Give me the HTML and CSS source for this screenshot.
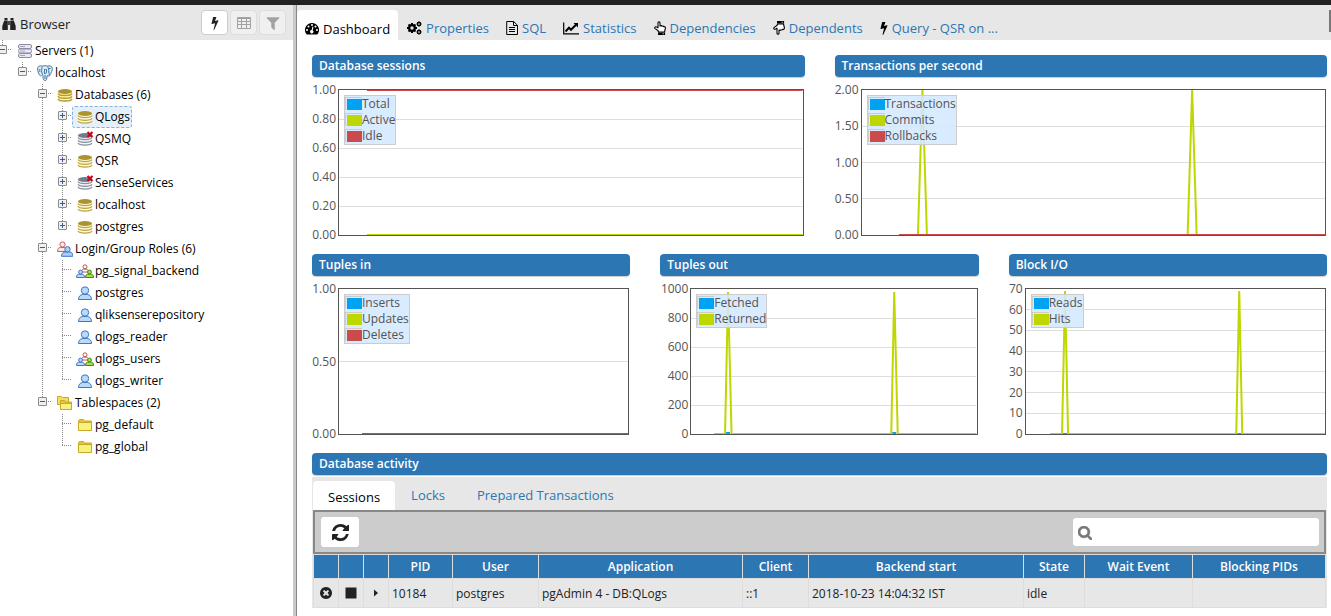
FILE: index.html
```html
<!DOCTYPE html>
<html lang="en">
<head>
<meta charset="utf-8">
<title>pgAdmin 4</title>
<link rel="stylesheet" href="styles.css">
</head>
<body>
<svg class="sprite" aria-hidden="true">
  <defs>
    <symbol id="bolt" viewBox="448 0 896 1792"><path d="M1333 566q18 20 7 44l-540 1157q-13 25-42 25-4 0-14-2-17-5-25.500-19t-4.500-30l197-808-406 101q-4 1-12 1-18 0-31-11-18-15-13-39l201-825q4-14 16-23t28-9h328q19 0 32 12.500t13 29.500q0 8-5 18l-171 463 396-98q8-2 12-2 19 0 34 15z"/></symbol>
    <symbol id="filter" viewBox="128 128 1536 1536"><path d="M1595 295q17 41-14 70l-493 493v742q0 42-39 59-13 5-25 5-27 0-45-19l-256-256q-19-19-19-45v-486l-493-493q-31-29-14-70 17-39 59-39h1280q42 0 59 39z"/></symbol>
    <symbol id="table" viewBox="0 0 14 12"><path fill-rule="evenodd" d="M1 0h12q1 0 1 1v10q0 1-1 1H1q-1 0-1-1V1q0-1 1-1zM1 2v2h3V2zM5 2v2h4V2zM10 2v2h3V2zM1 5v2h3V5zM5 5v2h4V5zM10 5v2h3V5zM1 8v3h3V8zM5 8v3h4V8zM10 8v3h3V8z"/></symbol>
    <symbol id="binoculars" viewBox="0 0 14 14"><path d="M2.500 1h3v2H2.500zM8.500 1h3v2h-3zM2.200 3.500h3.600V13H.3V9zM8.200 3.500h3.600L13.700 9v4H8.200zM6.200 4h1.600v4H6.200z"/></symbol>
    <symbol id="gauge" viewBox="0 0 14 12"><path fill-rule="evenodd" d="M7 0a7 7 0 0 1 6 10.600q-.3.900-1.200.900H2.200q-.9 0-1.200-.9A7 7 0 0 1 7 0zM2 6a1 1 0 1 0 0 2 1 1 0 0 0 0-2zM3.500 2.500a1 1 0 1 0 0 2 1 1 0 0 0 0-2zM7 1a1 1 0 1 0 0 2 1 1 0 0 0 0-2zM10.500 2.500a1 1 0 1 0 0 2 1 1 0 0 0 0-2zM12 6a1 1 0 1 0 0 2 1 1 0 0 0 0-2zM7.400 3.600L6.700 7.100a1.600 1.600 0 1 0 1 .3l.7-3.500z"/></symbol>
    <symbol id="cogs" viewBox="0 0 15 14"><circle cx="5" cy="7" r="2.800" fill="none" stroke="currentColor" stroke-width="2.200"/><path fill="none" stroke="currentColor" stroke-width="2" d="M5 2v2M5 10v2M0 7h2M8 7h2M1.500 3.500l1.400 1.400M7.100 9.100l1.400 1.400M1.500 10.500l1.400-1.400M7.100 4.900l1.400-1.400"/><g fill="none" stroke="currentColor"><circle cx="12" cy="3" r="1.500" stroke-width="1.300"/><circle cx="12" cy="11" r="1.500" stroke-width="1.300"/><path d="M12 .2V1M12 5v.8M9.400 3h.8M13.800 3h.9M10 1l.8.8M13.200 4.200l.8.800M10 5l.8-.8M13.200 1.800L14 1M12 8.200V9M12 13v.8M9.400 11h.8M13.800 11h.9M10 9l.8.8M13.200 12.200l.8.800M10 13l.8-.8M13.200 9.800L14 9"/></g></symbol>
    <symbol id="file" viewBox="0 0 12 14"><path fill="none" stroke="currentColor" d="M.7.500h7l3.800 3.800v9.200H.7zM7.500.500v4h4M3 6.500h6M3 8.500h6M3 10.500h6"/></symbol>
    <symbol id="line" viewBox="0 0 16 13"><path fill="none" stroke="currentColor" stroke-width="1.200" d="M.7 1v11.300H16"/><path fill="none" stroke="currentColor" stroke-width="2" d="M2.500 10L6 6.300l2 2L13 3.200"/><path d="M10.500 1.500H15V6z"/></symbol>
    <symbol id="hand-up" viewBox="0 0 12 14"><path fill="#fff" stroke="currentColor" stroke-width="1.100" stroke-linejoin="round" d="M4 9.500L1.200 7.600C.1 6.500 1.300 5.300 2.500 5.900L4 6.800V1.700c0-1.300 2-1.300 2 0V5c.8-.6 1.600-.4 1.900.2.800-.4 1.500-.1 1.700.5 1-.3 1.800.2 1.800 1.200 0 1.700-.8 2.500-.8 4.100H4.500z"/><path d="M4 11.500h7.100V14H4z"/><path fill="#fff" d="M8.700 12.200h1v1h-1z"/></symbol>
    <symbol id="hand-down" viewBox="0 0 12 14"><path fill="#fff" stroke="currentColor" stroke-width="1.100" stroke-linejoin="round" d="M4 4.500L1.200 6.400C.1 7.500 1.300 8.700 2.500 8.100L4 7.200v5.100c0 1.300 2 1.300 2 0V9c.8.600 1.600.4 1.900-.2.800.4 1.500.1 1.700-.5 1 .3 1.800-.2 1.800-1.200 0-1.700-.8-2.500-.8-4.100H4.500z"/><path d="M4 0h7.100v2.500H4z"/><path fill="#fff" d="M8.700 .8h1v1h-1z"/></symbol>
    <symbol id="refresh" viewBox="128 128 1536 1536"><path d="M1639 1056q0 5-1 7-64 268-268 434.500t-478 166.500q-146 0-282.500-55t-243.500-157l-129 129q-19 19-45 19t-45-19-19-45v-448q0-26 19-45t45-19h448q26 0 45 19t19 45-19 45l-137 137q71 66 161 102t187 36q134 0 250-65t186-179q11-17 53-117 8-23 30-23h192q13 0 22.500 9.500t9.500 22.500zm25-800v448q0 26-19 45t-45 19h-448q-26 0-45-19t-19-45 19-45l138-138q-148-137-349-137-134 0-250 65t-186 179q-11 17-53 117-8 23-30 23h-199q-13 0-22.500-9.500t-9.500-22.500v-7q65-268 270-434.500t480-166.500q146 0 284 55.500t245 156.500l130-129q19-19 45-19t45 19 19 45z"/></symbol>
    <symbol id="search" viewBox="64 128 1664 1664"><path stroke="currentColor" stroke-width="70" d="M1216 832q0-185-131.500-316.500t-316.500-131.500-316.500 131.500-131.500 316.500 131.500 316.500 316.500 131.500 316.500-131.500 131.500-316.500zm512 832q0 52-38 90t-90 38q-54 0-90-38l-343-342q-179 124-399 124-143 0-273.500-55.500t-225-150-150-225-55.500-273.500 55.500-273.500 150-225 225-150 273.500-55.500 273.500 55.500 225 150 150 225 55.500 273.500q0 220-124 399l343 343q37 37 37 90z"/></symbol>
    <symbol id="cancel" viewBox="128 128 1536 1536"><path d="M1277 1122q0-26-19-45l-181-181 181-181q19-19 19-45 0-27-19-46l-90-90q-19-19-46-19-26 0-45 19l-181 181-181-181q-19-19-45-19-27 0-46 19l-90 90q-19 19-19 46 0 26 19 45l181 181-181 181q-19 19-19 45 0 27 19 46l90 90q19 19 46 19 26 0 45-19l181-181 181 181q19 19 45 19 27 0 46-19l90-90q19-19 19-46zm387-226q0 209-103 385.500t-279.500 279.500-385.500 103-385.500-103-279.500-279.500-103-385.500 103-385.500 279.500-279.500 385.500-103 385.500 103 279.500 279.500 103 385.500z"/></symbol>
    <symbol id="stop" viewBox="0 0 12 12"><path d="M.500.500h11v11H.500z"/></symbol>
    <symbol id="caret" viewBox="0 0 12 12"><path d="M4 2.500l4 3.500L4 9.500z"/></symbol>

    <symbol id="servers" viewBox="0 0 16 16"><g fill="#e9e9f1" stroke="#8b8ba5"><rect x="1.500" y="1.500" width="13" height="4" rx="1.500"/><rect x="1.500" y="6" width="13" height="4" rx="1.500"/><rect x="1.500" y="10.500" width="13" height="4" rx="1.500"/></g><path stroke="#a5a5ba" d="M3 3.500h5M3 8h5M3 12.500h5"/></symbol>
    <symbol id="elephant" viewBox="0 0 16 16"><path fill="#dcecf7" stroke="#4379a3" stroke-width="1" stroke-linejoin="round" d="M5.500 1.200C2.500.2.500 1.500.600 4c.1 2.500 1.500 6.500 2.700 6.800.8.200 1.300-.6 2-1.300l.7.500c-.1 1.800-.2 5.200 1.700 5.500 2 .2 2.200-1.500 2.300-4.600h1.900c1.300-.1 1.700-.7.600-.8 1.800-2 3-5.200 2.800-7C14.900.9 12.500.4 10.500 1.200 9 .5 7 .5 5.500 1.200z"/><path fill="none" stroke="#4379a3" d="M5.500 1.500C4.500 3 4.700 5 4.700 7l.6 2M10.500 1.500c1 1.500 1.500 3.500 1.200 5.500l.8 3M7.500 4v5M7 4.500h1.500M12 3.500h1.500M2.800 4v3M9.500 4v3l-1 2M8 10v4"/></symbol>
    <symbol id="db" viewBox="0 0 16 16"><path fill="#fffbd6" d="M1 4v8c0 3.300 14 3.300 14 0V4z"/><ellipse cx="8" cy="4.500" rx="7" ry="2.500" fill="#ad9330"/><path fill="none" stroke="#bda447" stroke-width="1.200" d="M1 6.500c1 2.700 13 2.700 14 0M1 9.300c1 2.700 13 2.700 14 0M1 12c1 2.700 13 2.700 14 0"/></symbol>
    <symbol id="dbs" viewBox="0 0 16 16"><path fill="#fff3a0" d="M1 4v8c0 3.300 14 3.300 14 0V4z"/><ellipse cx="8" cy="4.500" rx="7" ry="2.500" fill="#ad9330"/><path fill="none" stroke="#b59a36" stroke-width="1.500" d="M1 6.500c1 2.700 13 2.700 14 0M1 9.300c1 2.700 13 2.700 14 0M1 12c1 2.700 13 2.700 14 0"/></symbol>
    <symbol id="dbx" viewBox="0 0 16 16"><path fill="#f4f5f8" d="M1 4v8c0 3.300 14 3.300 14 0V4z"/><ellipse cx="8" cy="4.500" rx="7" ry="2.500" fill="#717d8d"/><path fill="none" stroke="#8691a0" stroke-width="1.200" d="M1 6.500c1 2.700 13 2.700 14 0M1 9.300c1 2.700 13 2.700 14 0M1 12c1 2.700 13 2.700 14 0"/><path stroke="#d0021b" stroke-width="2.200" d="M10.500 1l5 5M15.500 1l-5 5"/></symbol>
    <symbol id="user" viewBox="0 0 16 16"><path fill="#b9dafa" stroke="#3f78c3" stroke-linejoin="round" d="M1.500 14.500c0-3 1.500-4.500 4-5h5c2.500.5 4 2 4 5z"/><circle cx="8" cy="5.500" r="3.700" fill="#b9dafa" stroke="#3f78c3"/></symbol>
    <symbol id="roles" viewBox="0 0 16 16"><path fill="#fbe8e6" stroke="#cc5b59" d="M.500 10.500C.500 7.500 2 6.500 3.500 6.500h4c1.500 0 2.500 1 2.500 4z"/><circle cx="5.500" cy="3.500" r="2.600" fill="#fbe8e6" stroke="#cc5b59"/><path fill="#a9cdf6" stroke="#3f78c3" d="M4.500 15.300c0-3 1.500-4 3.500-4.300h5c2 .3 2.800 1.300 2.800 4.300z"/><circle cx="10.500" cy="8.300" r="2.700" fill="#a9cdf6" stroke="#3f78c3"/></symbol>
    <symbol id="group" viewBox="0 0 18 16"><g stroke-width="1"><path fill="#fff" stroke="#cc4f4c" d="M5.500 9c0-2 1-2.500 2-2.800h3c1 .3 2 .8 2 2.800z"/><circle cx="9" cy="3.800" r="2" fill="#fff" stroke="#cc4f4c"/><path fill="#b9dafa" stroke="#3f78c3" d="M.500 14.500c0-2.500 1-3 2-3.300h4c1 .3 2 .8 2 3.300z"/><circle cx="4.500" cy="9" r="1.900" fill="#b9dafa" stroke="#3f78c3"/><path fill="#a6e04a" stroke="#3f8a12" d="M9.500 14.500c0-2.500 1-3 2-3.300h4c1 .3 2 .8 2 3.300z"/><circle cx="13.500" cy="9" r="1.900" fill="#a6e04a" stroke="#3f8a12"/></g></symbol>
    <symbol id="folder" viewBox="0 0 16 16"><path fill="#dfc649" stroke="#c9a827" d="M1.500 12.500v-9l1-1h4l1 1.500h7v8.500z"/><path fill="#f7f27e" stroke="#c9a827" d="M1.500 5.500h13v8h-13z"/></symbol>
    <symbol id="folders" viewBox="0 0 16 16"><path fill="#f0e05e" stroke="#c9a827" d="M.500 9.500v-8h4l1 1h6v7z"/><path fill="#dfc649" stroke="#c9a827" d="M3.500 14.500v-9h4l1 1.500h6v7.500z"/><path fill="#f7f27e" stroke="#c9a827" d="M3.500 8.500h11v6h-11z"/></symbol>
  </defs>
</svg>

<div class="navbar"></div>
<div class="app">
  <aside class="browser">
    <header class="browser-head">
      <svg class="i14"><use href="#binoculars"/></svg>
      <h1>Browser</h1>
      <div class="tools">
        <button class="tool" aria-label="Query tool"><svg class="bolt"><use href="#bolt"/></svg></button>
        <button class="tool" disabled aria-label="View data"><svg class="i14"><use href="#table"/></svg></button>
        <button class="tool" disabled aria-label="Filtered rows"><svg class="i14"><use href="#filter"/></svg></button>
      </div>
    </header>
    <ul class="tree">
      <li><div class="row"><button class="toggle minus" aria-label="Collapse"></button><span class="item"><svg><use href="#servers"/></svg>Servers (1)</span></div>
        <ul>
          <li><div class="row"><button class="toggle minus" aria-label="Collapse"></button><span class="item"><svg><use href="#elephant"/></svg>localhost</span></div>
            <ul>
              <li><div class="row"><button class="toggle minus" aria-label="Collapse"></button><span class="item"><svg><use href="#dbs"/></svg>Databases (6)</span></div>
                <ul>
                  <li><div class="row"><button class="toggle" aria-label="Expand"></button><span class="item selected"><svg><use href="#db"/></svg>QLogs</span></div></li>
                  <li><div class="row"><button class="toggle" aria-label="Expand"></button><span class="item"><svg><use href="#dbx"/></svg>QSMQ</span></div></li>
                  <li><div class="row"><button class="toggle" aria-label="Expand"></button><span class="item"><svg><use href="#db"/></svg>QSR</span></div></li>
                  <li><div class="row"><button class="toggle" aria-label="Expand"></button><span class="item"><svg><use href="#dbx"/></svg>SenseServices</span></div></li>
                  <li><div class="row"><button class="toggle" aria-label="Expand"></button><span class="item"><svg><use href="#db"/></svg>localhost</span></div></li>
                  <li><div class="row"><button class="toggle" aria-label="Expand"></button><span class="item"><svg><use href="#db"/></svg>postgres</span></div></li>
                </ul>
              </li>
              <li><div class="row"><button class="toggle minus" aria-label="Collapse"></button><span class="item"><svg><use href="#roles"/></svg>Login/Group Roles (6)</span></div>
                <ul>
                  <li><div class="row"><span class="item"><svg class="group"><use href="#group"/></svg>pg_signal_backend</span></div></li>
                  <li><div class="row"><span class="item"><svg><use href="#user"/></svg>postgres</span></div></li>
                  <li><div class="row"><span class="item"><svg><use href="#user"/></svg>qliksenserepository</span></div></li>
                  <li><div class="row"><span class="item"><svg><use href="#user"/></svg>qlogs_reader</span></div></li>
                  <li><div class="row"><span class="item"><svg class="group"><use href="#group"/></svg>qlogs_users</span></div></li>
                  <li><div class="row"><span class="item"><svg><use href="#user"/></svg>qlogs_writer</span></div></li>
                </ul>
              </li>
              <li><div class="row"><button class="toggle minus" aria-label="Collapse"></button><span class="item"><svg><use href="#folders"/></svg>Tablespaces (2)</span></div>
                <ul>
                  <li><div class="row"><span class="item"><svg><use href="#folder"/></svg>pg_default</span></div></li>
                  <li><div class="row"><span class="item"><svg><use href="#folder"/></svg>pg_global</span></div></li>
                </ul>
              </li>
            </ul>
          </li>
        </ul>
      </li>
    </ul>
  </aside>

  <main class="main">
    <nav class="tabs">
      <a class="tab active" href="#"><svg class="i14"><use href="#gauge"/></svg>Dashboard</a>
      <a class="tab" href="#"><svg class="i15"><use href="#cogs"/></svg>Properties</a>
      <a class="tab" href="#"><svg class="i12"><use href="#file"/></svg>SQL</a>
      <a class="tab" href="#"><svg class="i16"><use href="#line"/></svg>Statistics</a>
      <a class="tab" href="#"><svg class="i12"><use href="#hand-up"/></svg>Dependencies</a>
      <a class="tab" href="#"><svg class="i12"><use href="#hand-down"/></svg>Dependents</a>
      <a class="tab" href="#"><svg class="bolt"><use href="#bolt"/></svg>Query - QSR on ...</a>
      <button class="more" aria-label="More tabs"></button>
    </nav>

    <div class="dashboard">
      <div class="charts two">
        <section>
          <h2>Database sessions</h2>
          <div class="chart">
            <div class="axis"><span>1.00</span><span>0.80</span><span>0.60</span><span>0.40</span><span>0.20</span><span>0.00</span></div>
            <div class="plot">
              <svg viewBox="0 0 464 145" preserveAspectRatio="none"><path class="grid" d="M0 29.500h464M0 58.500h464M0 87.500h464M0 116.500h464"/><path class="red" d="M28 0h436"/><path class="lime" d="M28 145h436"/></svg>
              <ul class="legend"><li class="blue">Total</li><li class="lime">Active</li><li class="red">Idle</li></ul>
            </div>
          </div>
        </section>
        <section>
          <h2>Transactions per second</h2>
          <div class="chart">
            <div class="axis"><span>2.00</span><span>1.50</span><span>1.00</span><span>0.50</span><span>0.00</span></div>
            <div class="plot">
              <svg viewBox="0 0 464 145" preserveAspectRatio="none"><path class="grid" d="M0 36.500h464M0 72.500h464M0 108.500h464"/><path class="lime" d="M37 145h19L60.500 0 65 145h261L330.500 0l4.500 145h129"/><path class="red" d="M37 145h427"/></svg>
              <ul class="legend"><li class="blue">Transactions</li><li class="lime">Commits</li><li class="red">Rollbacks</li></ul>
            </div>
          </div>
        </section>
      </div>
      <div class="charts three">
        <section>
          <h2>Tuples in</h2>
          <div class="chart">
            <div class="axis"><span>1.00</span><span>0.50</span><span>0.00</span></div>
            <div class="plot">
              <svg viewBox="0 0 289 145" preserveAspectRatio="none"><path class="grid" d="M0 72.500h289"/><path class="red" d="M23 145h266"/></svg>
              <ul class="legend"><li class="blue">Inserts</li><li class="lime">Updates</li><li class="red">Deletes</li></ul>
            </div>
          </div>
        </section>
        <section>
          <h2>Tuples out</h2>
          <div class="chart">
            <div class="axis wide"><span>1000</span><span>800</span><span>600</span><span>400</span><span>200</span><span>0</span></div>
            <div class="plot">
              <svg viewBox="0 0 285 145" preserveAspectRatio="none"><path class="grid" d="M0 29.500h285M0 58.500h285M0 87.500h285M0 116.500h285"/><path class="blue" d="M35 144h4M201 144h4"/><path class="lime" d="M23 145h11L37 3l3.500 142H200L203 3l3.500 142H285"/></svg>
              <ul class="legend"><li class="blue">Fetched</li><li class="lime">Returned</li></ul>
            </div>
          </div>
        </section>
        <section>
          <h2>Block I/O</h2>
          <div class="chart">
            <div class="axis narrow"><span>70</span><span>60</span><span>50</span><span>40</span><span>30</span><span>20</span><span>10</span><span>0</span></div>
            <div class="plot">
              <svg viewBox="0 0 299 145" preserveAspectRatio="none"><path class="grid" d="M0 20.500h299M0 41.500h299M0 62.500h299M0 82.500h299M0 103.500h299M0 124.500h299"/><path class="blue" d="M37 145h4M211 145h4"/><path class="lime" d="M24 145h12L39 2l3 143h168L213 2l3 143h83"/></svg>
              <ul class="legend"><li class="blue">Reads</li><li class="lime">Hits</li></ul>
            </div>
          </div>
        </section>
      </div>

      <section class="activity">
        <h2>Database activity</h2>
        <div class="activity-body">
          <nav class="subtabs">
            <a class="subtab active" href="#">Sessions</a>
            <a class="subtab" href="#">Locks</a>
            <a class="subtab" href="#">Prepared Transactions</a>
          </nav>
          <div class="toolbar">
            <button class="refresh" aria-label="Refresh"><svg><use href="#refresh"/></svg></button>
            <label class="search"><svg class="i14"><use href="#search"/></svg><input type="text" aria-label="Search"></label>
          </div>
          <table>
            <colgroup><col class="c-icon"><col class="c-icon"><col class="c-icon"><col class="c-pid"><col class="c-user"><col class="c-app"><col class="c-client"><col><col class="c-state"><col class="c-wait"><col class="c-block"></colgroup>
            <thead><tr><th></th><th></th><th></th><th>PID</th><th>User</th><th>Application</th><th>Client</th><th>Backend start</th><th>State</th><th>Wait Event</th><th>Blocking PIDs</th></tr></thead>
            <tbody><tr>
              <td class="act"><button aria-label="Terminate session"><svg class="i12"><use href="#cancel"/></svg></button></td>
              <td class="act"><button aria-label="Cancel query"><svg class="i12"><use href="#stop"/></svg></button></td>
              <td class="act"><button aria-label="Show details"><svg class="i12"><use href="#caret"/></svg></button></td>
              <td>10184</td><td>postgres</td><td>pgAdmin 4 - DB:QLogs</td><td>::1</td><td>2018-10-23 14:04:32 IST</td><td>idle</td><td></td><td></td>
            </tr></tbody>
          </table>
        </div>
      </section>
    </div>
  </main>
</div>
</body>
</html>
```

FILE: styles.css
```css
* { box-sizing: border-box; }
body {
  margin: 0;
  height: 100vh;
  display: flex;
  flex-direction: column;
  overflow: hidden;
  font-family: "Open Sans", sans-serif;
  font-size: 13px;
  line-height: 18px;
  color: #222;
  background: #fff;
}
ul { list-style: none; margin: 0; padding: 0; }
h1, h2 { margin: 0; }
a { text-decoration: none; }
button { font: inherit; color: inherit; padding: 0; border: 0; background: none; }
svg { fill: currentColor; flex: none; display: block; }
.sprite { position: absolute; width: 0; height: 0; }
.i12 { width: 12px; height: 14px; }
.i14 { width: 14px; height: 14px; }
.i15 { width: 15px; height: 14px; }
.i16 { width: 16px; height: 14px; }
.bolt { width: 8px; height: 14px; }

.navbar { flex: none; height: 5px; background: #222; }
.app { flex: 1; display: flex; min-height: 0; }

.browser { flex: none; width: 297px; border-right: 1px solid #888; box-shadow: inset -3px 0 #c9c9c9; overflow: hidden; }
.browser-head { display: flex; align-items: center; gap: 4px; height: 35px; margin-right: 3px; padding: 0 7px 0 2px; background: #e7e7e7; }
.browser-head h1 { font-size: 13px; font-weight: 400; line-height: 18px; padding-top: 3px; }
.browser-head > svg { margin-top: 2px; }
.tools { display: flex; gap: 2px; margin-left: auto; }
.tool { width: 27px; height: 25px; display: grid; place-items: center; background: #fff; border: 1px solid #ccc; border-radius: 4px; }
.tool:disabled { color: #a2a2a2; background: #f0f0f0; border-color: #ddd; }

.tree { margin-left: -7px; font-size: 12px; color: #000; }
.tree ul { padding-left: 20px; }
.tree li {
  background: repeating-linear-gradient(#888 0 1px, transparent 1px 2px) 9px 0 / 1px 100% no-repeat;
}
.tree li:last-child { background-size: 1px 9px; }
.row {
  display: flex;
  height: 22px;
  padding-left: 19px;
  background: repeating-linear-gradient(90deg, #888 0 1px, transparent 1px 2px) 9px 9px / 10px 1px no-repeat;
}
.toggle {
  width: 9px;
  height: 9px;
  margin: 5px 5px 0 -14px;
  border: 1px solid #8c8c8c;
  border-radius: 1px;
  background:
    linear-gradient(#3c5a9a, #3c5a9a) center / 5px 1px no-repeat,
    linear-gradient(#3c5a9a, #3c5a9a) center / 1px 5px no-repeat,
    #f0f0f0;
}
.toggle.minus { background: linear-gradient(#3c5a9a, #3c5a9a) center / 5px 1px no-repeat, #f0f0f0; }
.item { display: flex; align-items: center; gap: 2px; padding: 0 1px 0 4px; border: 1px solid transparent; border-radius: 3px; white-space: nowrap; }
.item svg { width: 16px; height: 16px; }
.item svg.group { width: 18px; margin: 0 -1px; }
.item.selected { border: 1px dashed #84b1dd; background: #e6f0fa; }

.main { flex: 1; min-width: 0; }
.tabs { display: flex; align-items: stretch; gap: 1px; height: 35px; padding-top: 5px; background: #e7e7e7; }
.tab { display: flex; align-items: center; gap: 4px; padding: 6px 8px 0; color: #2c76b4; white-space: nowrap; }
.tab svg { color: #000; }
.tab.active { padding-top: 8px; color: #000; background: #fff; border-radius: 4px 4px 0 0; }
.more { width: 2px; height: 22px; margin-left: auto; background: #777; }

.dashboard { display: flex; flex-direction: column; gap: 18px; padding: 15px 4px 0 15px; }
.charts { display: grid; gap: 30px; }
.two { grid-template-columns: 1fr 1fr; }
.three { grid-template-columns: 1fr 1fr 1fr; }
h2 {
  height: 22px;
  padding: 0 7px;
  font-size: 12px;
  font-weight: 600;
  line-height: 22px;
  color: #fff;
  background: #2c76b4;
  border-radius: 4px;
  box-shadow: 0 1px 1px #ccc;
}
.chart { display: flex; margin-top: 12px; padding-right: 1px; }
.axis { flex: none; display: flex; flex-direction: column; justify-content: space-between; width: 26px; margin: -8px 0; padding-right: 2px; text-align: right; font-size: 12px; line-height: 18px; color: #545454; }
.axis.wide { width: 30px; }
.axis.narrow { width: 16px; }
.plot { flex: 1; position: relative; height: 147px; border: 1px solid #545454; }
.plot svg { width: 100%; height: 100%; overflow: hidden; }
.plot path { fill: none; stroke-width: 2; stroke-linejoin: bevel; vector-effect: non-scaling-stroke; }
.plot .grid { stroke: #ddd; stroke-width: 1; }
.plot path.blue { stroke: #00a2f2; }
.plot path.lime { stroke: #bed700; }
.plot path.red { stroke: #cb4b4b; }
.legend { position: absolute; top: 5px; left: 5px; border: 1px solid #ccc; background: rgba(212, 232, 255, .88); font-size: 12px; line-height: 16px; color: #545454; }
.legend li { display: flex; align-items: center; height: 16px; }
.legend li::before { content: ""; width: 16px; height: 12px; margin-bottom: 2px; border: 1px solid #ccc; border-width: 1px 0 0 1px; background: linear-gradient(currentColor, currentColor) right bottom / 15px 11px no-repeat; }
.legend .blue::before { color: #00a2f2; }
.legend .lime::before { color: #bed700; }
.legend .red::before { color: #cb4b4b; }

.activity-body { margin-top: 2px; border: solid #e7e7e7; border-width: 0 1px; }
.subtabs { display: flex; height: 33px; padding-top: 4px; background: #e7e7e7; }
.subtab { padding: 5px 16px 0; color: #2c76b4; }
.subtab.active { padding: 7px 15px 0; color: #000; background: #fff; border-radius: 4px 4px 0 0; }
.toolbar { display: flex; justify-content: space-between; align-items: center; height: 44px; padding: 0 5px 0 6px; background: #ccc; border: 2px solid #888; }
.refresh { width: 38px; height: 30px; display: grid; place-items: center; color: #222; background: #fff; border-radius: 3px; }
.refresh svg { width: 17px; height: 17px; }
.search { display: flex; align-items: center; width: 246px; height: 28px; padding: 2px 5px 0; color: #777; background: #fff; border-radius: 3px; }
.search input { flex: 1; min-width: 0; padding: 0 4px; border: 0; outline: 0; background: none; font: inherit; }

table { width: 100%; table-layout: fixed; border-collapse: collapse; }
th { height: 24px; padding: 0; font-size: 12px; font-weight: 600; color: #fff; background: #2c76b4; border: 1px solid #ddd; }
td { height: 29px; padding: 2px 3px 0; font-size: 12px; background: #e7e7e7; border: 1px solid #ddd; white-space: nowrap; }
.act { padding: 0; }
.act button { display: block; margin: 0 auto; }
.c-icon { width: 25px; }
.c-pid { width: 64px; }
.c-user { width: 86px; }
.c-app { width: 204px; }
.c-client { width: 66px; }
.c-state { width: 61px; }
.c-wait { width: 108px; }
.c-block { width: 133px; }
```
